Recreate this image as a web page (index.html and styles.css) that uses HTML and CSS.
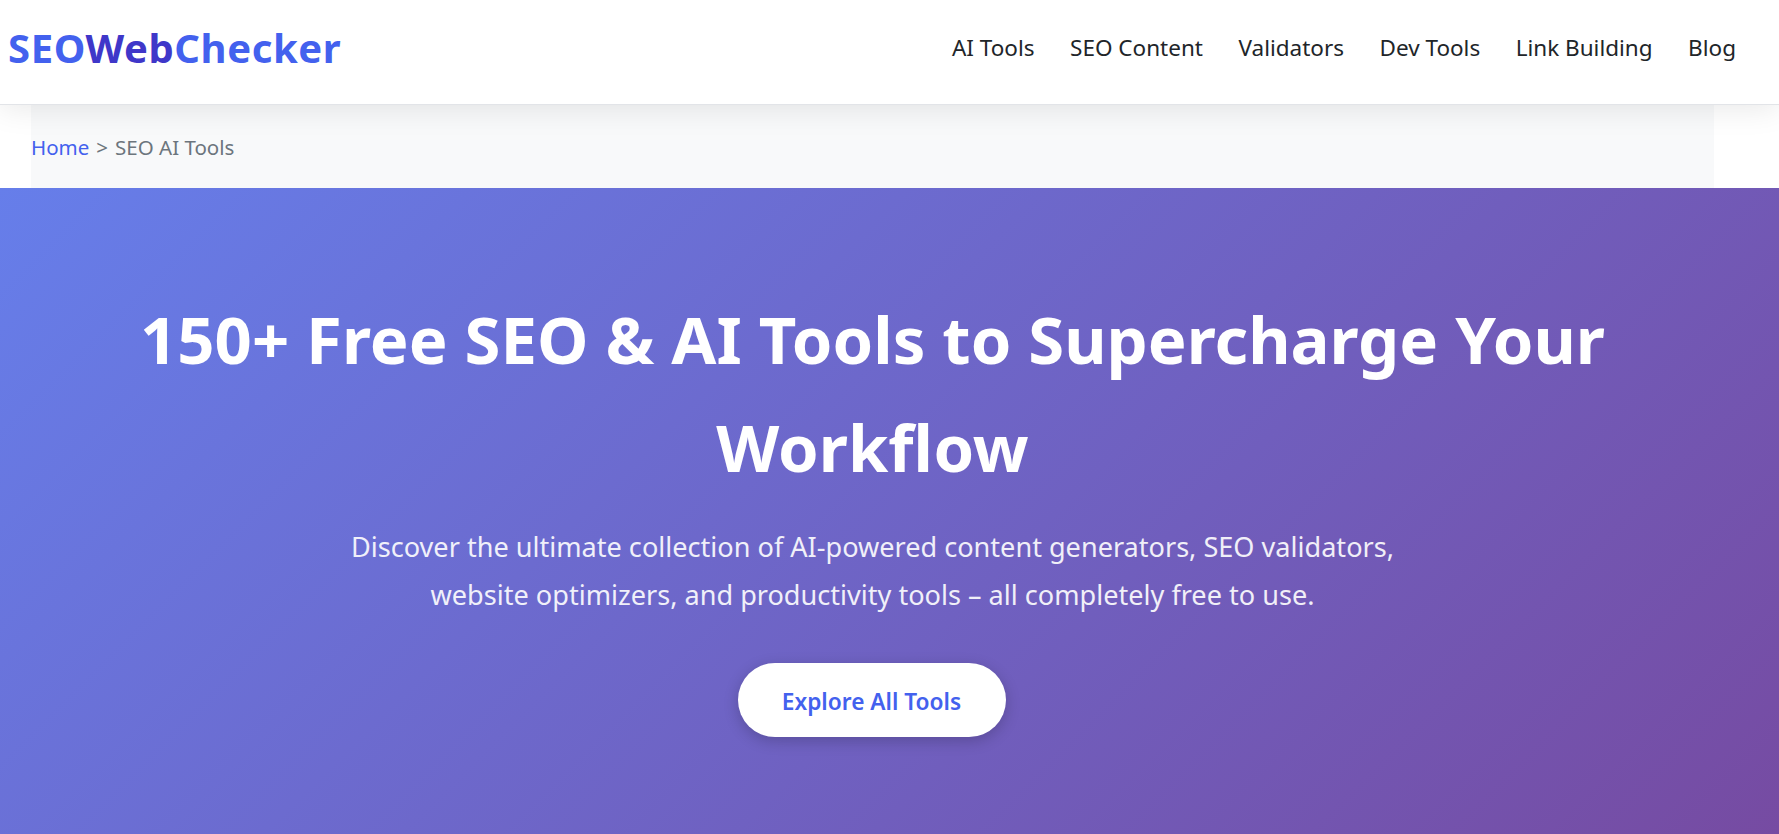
FILE: index.html
```html
<!DOCTYPE html>
<html lang="en">
<head>
    <meta charset="UTF-8">
    <title>SEOWebChecker</title>
    <link rel="stylesheet" href="styles.css">
</head>
<body>
<header class="header">
    <a href="#" class="logo">SEO<span class="logo-mid">Web</span>Checker</a>
    <ul class="nav">
        <li><a href="#">AI Tools</a></li>
        <li><a href="#">SEO Content</a></li>
        <li><a href="#">Validators</a></li>
        <li><a href="#">Dev Tools</a></li>
        <li><a href="#">Link Building</a></li>
        <li><a href="#">Blog</a></li>
    </ul>
</header>

<div class="breadcrumb">
    <a href="#">Home</a> <span class="sep">&gt;</span> SEO AI Tools
</div>

<section class="hero">
    <h1>150+ Free SEO &amp; AI Tools to Supercharge Your Workflow</h1>
    <p>Discover the ultimate collection of AI-powered content generators, SEO validators, website optimizers, and productivity tools – all completely free to use.</p>
    <a href="#" class="btn">Explore All Tools</a>
</section>
</body>
</html>
```

FILE: styles.css
```css
*{
    margin:0;
    padding:0;
    box-sizing:border-box;
}
html,body{
    width:100%;
    height:100%;
    overflow:hidden;
}
body{
    font-family:"Noto Sans","Open Sans",sans-serif;
    color:#212529;
    background:#fff;
}
a{
    text-decoration:none;
}
ul{
    list-style:none;
}
.header{
    height:105px;
    padding:0 43px 9px 8px;
    display:flex;
    align-items:center;
    justify-content:space-between;
    background:#fff;
    border-bottom:1px solid #e2e4e8;
    box-shadow:0 2px 30px rgba(0,0,0,.1);
    position:relative;
    z-index:2;
}
.logo{
    font-size:40px;
    font-weight:700;
    letter-spacing:.6px;
    color:#4361ee;
}
.logo-mid{
    color:#3f37c9;
}
.nav{
    display:flex;
    gap:35.5px;
    margin-top:-1px;
}
.nav a{
    font-size:22.5px;
    color:#212529;
}
.breadcrumb{
    height:83px;
    margin:0 65px 0 31px;
    display:flex;
    align-items:center;
    gap:7px;
    font-size:20.5px;
    color:#6c757d;
    background:#f8f9fa;
}
.breadcrumb a{
    color:#4361ee;
}
.hero{
    height:646px;
    padding:97px 65px 0 31px;
    text-align:center;
    color:#fff;
    background:linear-gradient(135deg,#667eea 0%,#764ba2 100%);
}
.hero h1{
    max-width:1500px;
    margin:0 auto 22px;
    font-size:65.2px;
    line-height:108px;
    font-weight:700;
}
.hero p{
    max-width:1100px;
    margin:0 auto 44px;
    font-size:27.1px;
    line-height:48px;
    opacity:.9;
}
.btn{
    display:inline-block;
    width:268px;
    height:74px;
    margin-right:2px;
    line-height:77px;
    border-radius:50px;
    font-size:22.7px;
    font-weight:600;
    color:#4361ee;
    background:#fff;
    box-shadow:0 4px 15px rgba(0,0,0,.2);
}
```
